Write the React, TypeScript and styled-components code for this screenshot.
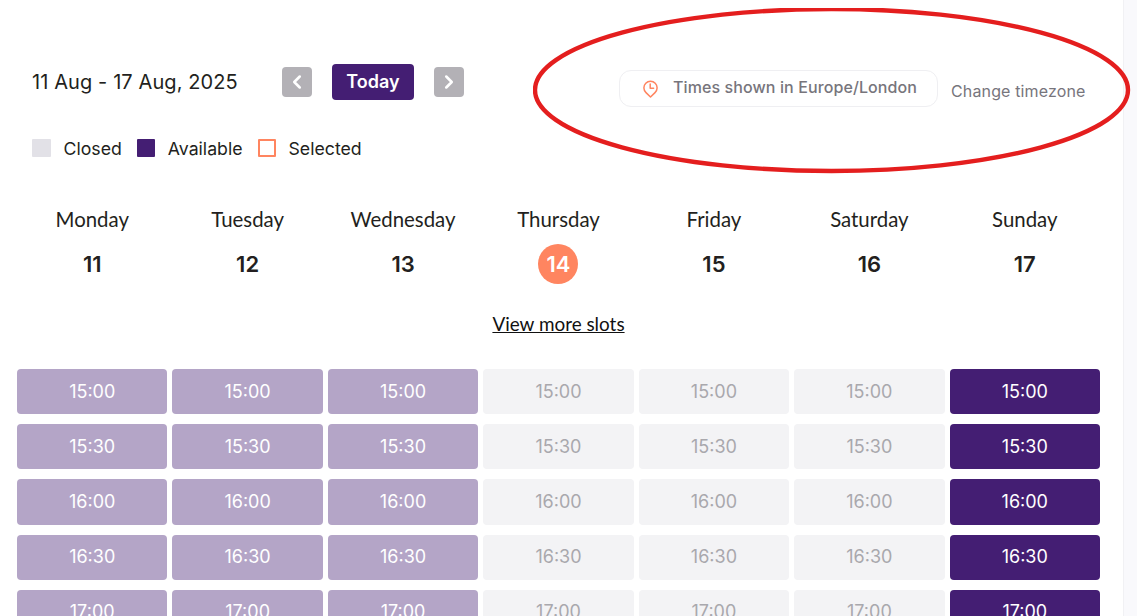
import React from 'react';
import styled, { createGlobalStyle } from 'styled-components';
import { ChevronLeft, ChevronRight } from 'lucide-react';

const days = [
	{ name: 'Monday', date: 11, state: 'past' },
	{ name: 'Tuesday', date: 12, state: 'past' },
	{ name: 'Wednesday', date: 13, state: 'past' },
	{ name: 'Thursday', date: 14, state: 'closed' },
	{ name: 'Friday', date: 15, state: 'closed' },
	{ name: 'Saturday', date: 16, state: 'closed' },
	{ name: 'Sunday', date: 17, state: 'open' }
];

const times = ['15:00', '15:30', '16:00', '16:30', '17:00'];

function App() {
	return (
		<Page>
			<GlobalStyle />
			<Main>
				<TopRow>
					<LeftTools>
						<DateRange>11 Aug - 17 Aug, 2025</DateRange>
						<ArrowButton aria-label='Previous week'>
							<ChevronLeft size={22} strokeWidth={2.8} />
						</ArrowButton>
						<TodayButton>Today</TodayButton>
						<ArrowButton aria-label='Next week'>
							<ChevronRight size={22} strokeWidth={2.8} />
						</ArrowButton>
					</LeftTools>
					<ZonePill>
						<svg width='15' height='18' viewBox='0 0 15 18' fill='none' stroke='#ff8560' strokeWidth='1.5' strokeLinecap='round' strokeLinejoin='round'>
							<path d='M7.5 17 L3 12.6 A6.6 6.6 0 1 1 12 12.6 Z' />
							<path d='M7.2 4 V8.2 H10.6' />
						</svg>
						Times shown in Europe/London
					</ZonePill>
					<ChangeZone>Change timezone</ChangeZone>
				</TopRow>
				<Legend>
					<LegendItem><Swatch $kind='closed' />Closed</LegendItem>
					<LegendItem><Swatch $kind='available' />Available</LegendItem>
					<LegendItem><Swatch $kind='selected' />Selected</LegendItem>
				</Legend>
				<WeekGrid>
					{days.map(day => (
						<DayHead key={day.name}>
							<DayName>{day.name}</DayName>
							<DayDate $today={day.date === 14}>{day.date}</DayDate>
						</DayHead>
					))}
				</WeekGrid>
				<MoreRow>
					<MoreLink href='#'>View more slots</MoreLink>
				</MoreRow>
				<SlotGrid>
					{times.map(time => days.map(day => (
						<Slot key={day.name + time} $state={day.state}>{time}</Slot>
					)))}
				</SlotGrid>
			</Main>
			<SideStrip />
			<Annotation width='600' height='174' viewBox='0 0 600 174' fill='none'>
				<ellipse cx='298.5' cy='82' rx='296.5' ry='81' stroke='#e41e1e' strokeWidth='4.4' />
			</Annotation>
		</Page>
	);
}

const GlobalStyle = createGlobalStyle`
	html, body {
		margin: 0;
		padding: 0;
		height: 100%;
		overflow: hidden;
		background: #fff;
	}

	* { box-sizing: border-box; }
`;

const Page = styled.div`
	position: relative;
	display: flex;
	width: 1137px;
	height: 616px;
	overflow: hidden;
	font-family: Inter, 'Liberation Sans', sans-serif;
	color: #231f20;
`;

const Main = styled.main`
	width: 1123px;
	padding: 65px 23px 0 17px;
`;

const SideStrip = styled.div`
	flex: 1;
	background: #f9f9fc;
	border-left: 1px solid #f1f1f4;
`;

const Annotation = styled.svg`
	position: absolute;
	top: 8px;
	left: 533px;
`;

const TopRow = styled.div`
	display: flex;
	align-items: center;
	height: 34px;
	padding-left: 15px;
`;

const LeftTools = styled.div`
	display: flex;
	align-items: center;
	width: 587px;
`;

const DateRange = styled.span`
	width: 250px;
	font-size: 20px;
	letter-spacing: 0.1px;
`;

const ArrowButton = styled.button`
	display: flex;
	align-items: center;
	justify-content: center;
	width: 30px;
	height: 30px;
	padding: 0;
	border: 0;
	border-radius: 4px;
	background: #b3b1b6;
	color: #fff;
`;

const TodayButton = styled.button`
	width: 82px;
	height: 36px;
	margin: 0 20px;
	padding: 0 0 1px;
	border: 0;
	border-radius: 4px;
	background: #441e73;
	color: #fff;
	font-family: inherit;
	font-size: 18px;
	font-weight: 600;
`;

const ZonePill = styled.div`
	display: flex;
	align-items: center;
	width: 319px;
	height: 37px;
	margin-top: 13px;
	padding: 0 0 4px 23px;
	border: 1px solid #efeff2;
	border-radius: 12px;
	font-size: 16px;
	font-weight: 500;
	letter-spacing: 0.1px;
	color: #77757c;
	gap: 15px;

	svg { margin-top: 4px; }
`;

const ChangeZone = styled.span`
	margin: 17px 0 0 13px;
	font-size: 16px;
	letter-spacing: 0.14px;
	color: #77757c;
`;

const Legend = styled.div`
	display: flex;
	align-items: center;
	height: 24px;
	margin-top: 37px;
	padding-left: 15px;
	gap: 15px;
`;

const LegendItem = styled.div`
	display: flex;
	align-items: center;
	font-size: 17.7px;
	gap: 12.5px;
`;

const swatchColors = {
	closed: '#e2e1e7',
	available: '#441e73',
	selected: '#fff'
};

const Swatch = styled.span<{ $kind: keyof typeof swatchColors }>`
	width: ${props => props.$kind === 'closed' ? '19px' : '18.5px'};
	height: 18.5px;
	background: ${props => swatchColors[props.$kind]};
	border: ${props => props.$kind === 'selected' ? '2px solid #ff8560' : '0'};
	border-radius: 1px;
`;

const WeekGrid = styled.div`
	display: grid;
	grid-template-columns: repeat(7, 1fr);
	margin-top: 46px;
	column-gap: 5px;
`;

const DayHead = styled.div`
	display: flex;
	flex-direction: column;
	align-items: center;
`;

const DayName = styled.span`
	height: 26px;
	font-family: Lato, 'Liberation Sans', sans-serif;
	font-size: 20.4px;
	line-height: 26px;
`;

const DayDate = styled.span<{ $today: boolean }>`
	display: flex;
	align-items: center;
	justify-content: center;
	width: 40px;
	height: 40px;
	margin-top: 12px;
	border-radius: 50%;
	background: ${props => props.$today ? '#ff8560' : 'transparent'};
	color: ${props => props.$today ? '#fff' : '#231f20'};
	font-size: 22px;
	font-weight: 600;
`;

const MoreRow = styled.div`
	display: flex;
	justify-content: center;
	margin-top: 28px;
`;

const MoreLink = styled.a`
	font-family: Lato, 'Liberation Sans', sans-serif;
	font-size: 18.9px;
	line-height: 24px;
	color: #111;
	text-decoration: underline;
`;

const SlotGrid = styled.div`
	display: grid;
	grid-template-columns: repeat(7, 1fr);
	grid-auto-rows: 45.2px;
	margin-top: 33px;
	gap: 10px 5px;
`;

const slotThemes: Record<string, { bg: string; fg: string }> = {
	past: { bg: '#b4a5c7', fg: '#fff' },
	closed: { bg: '#f3f3f5', fg: '#a9a8ad' },
	open: { bg: '#441e73', fg: '#fff' }
};

const Slot = styled.div<{ $state: string }>`
	display: flex;
	align-items: center;
	justify-content: center;
	border-radius: 4px;
	background: ${props => slotThemes[props.$state].bg};
	color: ${props => slotThemes[props.$state].fg};
	font-size: 18px;
	padding-bottom: 1px;
`;

export default App;
